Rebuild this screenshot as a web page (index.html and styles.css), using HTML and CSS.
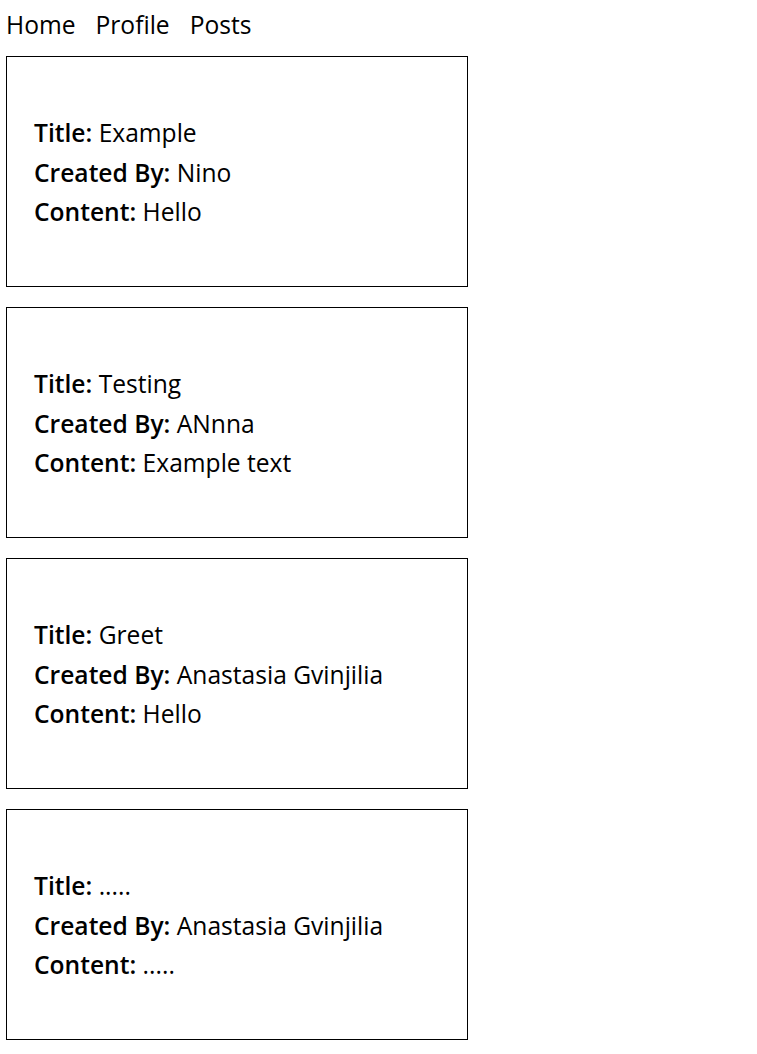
FILE: index.html
```html
<!DOCTYPE html>
<html>
<head>
<meta charset="utf-8">
<link rel="stylesheet" href="styles.css">
</head>
<body>
<nav class="nav">
  <a class="nav-link" href="#">Home</a>
  <a class="nav-link" href="#">Profile</a>
  <a class="nav-link" href="#">Posts</a>
</nav>
<main class="posts">
  <section class="post">
    <div class="row"><b>Title:</b> Example</div>
    <div class="row"><b>Created By:</b> Nino</div>
    <div class="row"><b>Content:</b> Hello</div>
  </section>
  <section class="post">
    <div class="row"><b>Title:</b> Testing</div>
    <div class="row"><b>Created By:</b> ANnna</div>
    <div class="row"><b>Content:</b> Example text</div>
  </section>
  <section class="post">
    <div class="row"><b>Title:</b> Greet</div>
    <div class="row"><b>Created By:</b> Anastasia Gvinjilia</div>
    <div class="row"><b>Content:</b> Hello</div>
  </section>
  <section class="post">
    <div class="row"><b>Title:</b> .....</div>
    <div class="row"><b>Created By:</b> Anastasia Gvinjilia</div>
    <div class="row"><b>Content:</b> .....</div>
  </section>
</main>
</body>
</html>
```
FILE: styles.css
```css
html, body {
  margin: 0;
  padding: 0;
  background: #fff;
}
body {
  font-family: "Open Sans", "Noto Sans", sans-serif;
  font-size: 24.6px;
  color: #000;
  padding: 0 6px;
}
.nav {
  display: flex;
  gap: 20px;
  height: 48px;
  align-items: center;
  padding-left: 0;
  margin-bottom: 8px;
}
.nav-link {
  color: #000;
  text-decoration: none;
}
.posts {
  display: flex;
  flex-direction: column;
  gap: 20px;
}
.post {
  width: 462px;
  height: 231px;
  border: 1px solid #000;
  box-sizing: border-box;
  display: flex;
  flex-direction: column;
  justify-content: center;
  padding: 2px 0 0 27px;
}
.row {
  line-height: 39.5px;
}
.row b {
  font-weight: 600;
}
```
